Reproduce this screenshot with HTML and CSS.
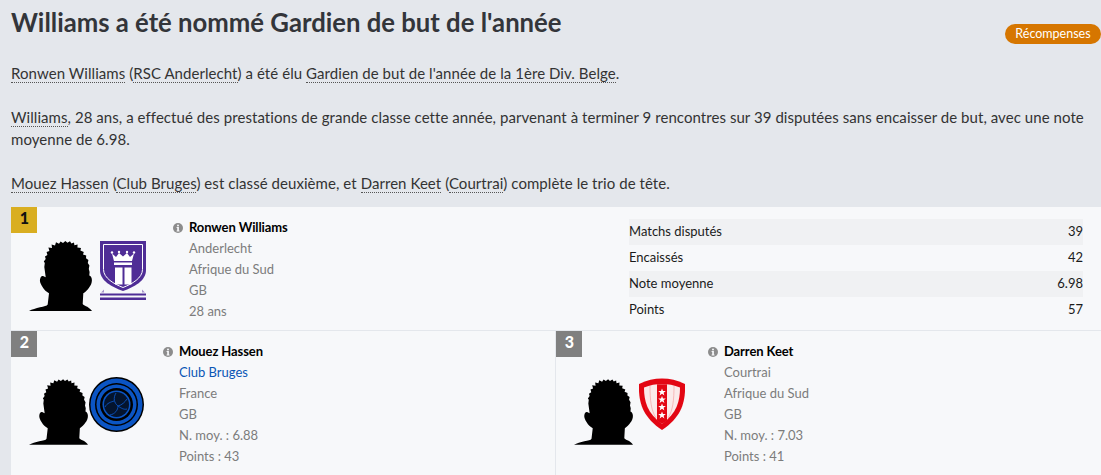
FILE: index.html
```html
<!DOCTYPE html>
<html lang="fr">
<head>
<meta charset="utf-8">
<title>Gardien de but de l'année</title>
<link rel="stylesheet" href="styles.css">
</head>
<body>
<svg class="defs" width="0" height="0" aria-hidden="true">
  <symbol id="sil" viewBox="0 0 63 70">
    <path d="M0 70C3 68.500 7 67.200 11 66.300C15 65.400 18 65 18.700 63.500L20 52.300C17.500 51 15 48.800 13.700 46.300C12 43.500 10.600 41 11 38.500C11.400 35.500 13 34.500 14 35L16.700 36.300L16 31L15.300 26L15.800 22L14.800 20.500L16.700 18L16 15.500L18.400 14L17.600 11L20.400 10L19.400 6.500L23 7L22.600 3.500L26 4.400L27 1.200L30 2.800L31.600 .4L34 2L36.400 0L38.400 1.800L41 .2L42.400 2.400L45 1.400L45.400 4.200L48.600 3.600L48.400 6.600L52 7L51.400 9.600L54.800 11L54 13.400L57.200 14.600L57 17.300L59.400 19L58.800 22L60.400 24.500L59.800 28L60.600 31L60.300 34.500C61.800 35 62.800 36.500 62.900 39C63 42 61.800 44.500 60.300 46.300C58.600 49 56.500 51 54.300 52.300L53.700 63C54.800 64.400 56.500 65 58.300 65.700C60 66.800 61.800 68.300 63 70Z"/>
  </symbol>
  <symbol id="info" viewBox="0 0 10 10">
    <circle cx="5" cy="5" r="5" fill="#8c8c8c"/>
    <rect x="4.100" y="1.700" width="1.800" height="1.600" fill="#f7f8fa"/>
    <path d="M3.600 4.100H5.900V7.500H6.500V8.400H3.600V7.500H4.200V5H3.600Z" fill="#f7f8fa"/>
  </symbol>
  <symbol id="star" viewBox="0 0 8 8">
    <path fill="#fff" d="M4 .5L5 3H7.800L5.600 4.700L6.400 7.500L4 5.800L1.600 7.500L2.400 4.700L.2 3H3Z"/>
  </symbol>
</svg>

<header class="head">
  <h1 class="title">Williams a été nommé Gardien de but de l'année</h1>
  <span class="tag">Récompenses</span>
</header>

<div class="story">
  <p><span class="lk">Ronwen Williams</span> (<span class="lk">RSC Anderlecht</span>) a été élu <span class="lk">Gardien de but de l'année de la 1ère Div. Belge</span>.</p>
  <p><span class="lk">Williams</span>, 28 ans, a effectué des prestations de grande classe cette année, parvenant à terminer 9 rencontres sur 39 disputées sans encaisser de but, avec une note<br>moyenne de 6.98.</p>
  <p><span class="lk">Mouez Hassen</span> (<span class="lk">Club Bruges</span>) est classé deuxième, et <span class="lk">Darren Keet</span> (<span class="lk">Courtrai</span>) complète le trio de tête.</p>
</div>

<section class="first card">
  <span class="rank gold">1</span>
  <div class="media media-a">
    <svg class="sil sil-a"><use href="#sil"/></svg>
    <svg class="crest crest-and" viewBox="0 0 46 59">
      <path fill="#4f2d96" d="M0 0H46V29C46 40 34 46 23 50C12 46 0 40 0 29Z"/>
      <path fill="none" stroke="#fff" stroke-width="1" d="M3.500 3.500H42.500V28.500C42.500 37 32 43 23 46.500C14 43 3.500 37 3.500 28.500Z"/>
      <g fill="#fff">
        <path d="M12 12.500L16 16L19 12L23 15.500L27 12L30 16L34 12.500L32 20H14Z"/>
        <circle cx="12" cy="11.500" r="1.200"/><circle cx="19" cy="11" r="1.200"/><circle cx="27" cy="11" r="1.200"/><circle cx="34" cy="11.500" r="1.200"/>
        <rect x="14" y="21.500" width="18" height="2.500"/>
        <rect x="15" y="26.500" width="7.500" height="17"/>
        <rect x="24.500" y="26.500" width="7" height="17"/>
      </g>
      <path fill="#4f2d96" d="M0 52.500H46V54.500H0ZM0 56.500H46V59H0Z"/>
      <path fill="#a795cc" d="M1 51.500L4 48.500V51.500ZM45 51.500L42 48.500V51.500Z"/>
    </svg>
  </div>
  <div class="info info-a">
    <div class="nm"><svg class="ic"><use href="#info"/></svg><b>Ronwen Williams</b></div>
    <div>Anderlecht</div>
    <div>Afrique du Sud</div>
    <div>GB</div>
    <div>28 ans</div>
  </div>
  <div class="stats">
    <div class="st"><span>Matchs disputés</span><span>39</span></div>
    <div class="st"><span>Encaissés</span><span>42</span></div>
    <div class="st"><span>Note moyenne</span><span>6.98</span></div>
    <div class="st"><span>Points</span><span>57</span></div>
  </div>
</section>

<div class="pair">
  <section class="card second">
    <span class="rank grey">2</span>
    <div class="media media-b">
      <svg class="sil sil-b"><use href="#sil"/></svg>
      <svg class="crest crest-bru" viewBox="0 0 55 55">
        <circle cx="27.500" cy="27.500" r="27.500" fill="#000"/>
        <circle cx="27.500" cy="27.500" r="26" fill="#0b55c4"/>
        <circle cx="27.500" cy="27.500" r="21.500" fill="#000"/>
        <circle cx="27.500" cy="27.500" r="20" fill="#0b55c4"/>
        <circle cx="27.500" cy="27.500" r="16.500" fill="#000"/>
        <circle cx="27.500" cy="27.500" r="14" fill="#0b55c4"/>
        <circle cx="27.500" cy="27.500" r="12.500" fill="#04142e"/>
        <path fill="none" stroke="#0b55c4" stroke-width=".9" d="M27 16C24 21 25 26 29 29C33 28 36 25 38 22M29 29C29 33 26 37 21 38M25 24C22 25 18 26 16 30M29 29C32 31 35 33 38 32"/>
      </svg>
    </div>
    <div class="info info-b">
      <div class="nm"><svg class="ic"><use href="#info"/></svg><b>Mouez Hassen</b></div>
      <div class="blue">Club Bruges</div>
      <div>France</div>
      <div>GB</div>
      <div>N. moy. : 6.88</div>
      <div>Points : 43</div>
    </div>
  </section>
  <section class="card third">
    <span class="rank grey">3</span>
    <div class="media media-b">
      <svg class="sil sil-b"><use href="#sil"/></svg>
      <svg class="crest crest-kor" viewBox="0 0 46 52">
        <path fill="#e30613" d="M0 6C8 2 15 .5 23 .5C31 .5 38 2 46 6C46.500 22 44 38 23 52C2 38 -.5 22 0 6Z"/>
        <path fill="#fbeaea" d="M5 9.500C11 7 17 6 23 6C29 6 35 7 41 9.500C41 23 38 35 23 46C8 35 5 23 5 9.500Z"/>
        <path fill="#e30613" d="M18 6.300H28V42.500L23 46L18 42.500Z"/>
        <path fill="none" stroke="#f3a3a3" stroke-width=".7" d="M11 8C11 22 12 32 17 40M35 8C35 22 34 32 29 40"/>
        <use href="#star" x="19" y="10" width="8" height="8"/>
        <use href="#star" x="19" y="17.500" width="8" height="8"/>
        <use href="#star" x="19" y="25" width="8" height="8"/>
        <use href="#star" x="19" y="33" width="8" height="8"/>
      </svg>
    </div>
    <div class="info info-b">
      <div class="nm"><svg class="ic"><use href="#info"/></svg><b>Darren Keet</b></div>
      <div>Courtrai</div>
      <div>Afrique du Sud</div>
      <div>GB</div>
      <div>N. moy. : 7.03</div>
      <div>Points : 41</div>
    </div>
  </section>
</div>
</body>
</html>
```

FILE: styles.css
```css
* { box-sizing: border-box; }
html, body { margin: 0; height: 475px; overflow: hidden; }
body {
  background: #e4e7ec;
  color: #333;
  font-family: Lato, "Liberation Sans", sans-serif;
  font-size: 15px;
  letter-spacing: .06px;
  line-height: 22px;
  padding-left: 11px;
}
.defs { position: absolute; }
.head { display: flex; justify-content: space-between; height: 62px; }
.title {
  margin: 7px 0 0;
  font-size: 25.7px;
  line-height: 30px;
  font-weight: 700;
  letter-spacing: 0;
  color: #33353a;
}
.tag {
  align-self: flex-start;
  margin-top: 24px;
  width: 96px;
  height: 20px;
  border-radius: 10px;
  background: #d67600;
  color: #fff;
  font-size: 12.5px;
  letter-spacing: 0;
  line-height: 20px;
  text-align: center;
}
.story { padding-right: 5px; }
.story p { margin: 0 0 22px; }
.lk { border-bottom: 1px dotted #555; }
.card { position: relative; background: #f7f8fa; display: flex; }
.first {
  margin-top: -9px;
  height: 124px;
  border-bottom: 1px solid #e4e7ec;
}
.rank {
  position: absolute;
  left: 0;
  top: 0;
  width: 26px;
  height: 26px;
  padding-left: 1px;
  font-size: 16px;
  font-weight: 900;
  line-height: 22px;
  text-align: center;
}
.gold { background: #d9ae21; color: #111; }
.grey { background: #808080; color: #fff; }
.media { display: flex; align-items: flex-start; flex: none; }
.media-a { width: 162px; padding: 34px 0 0 18px; }
.media-b { width: 152px; padding: 46px 0 0 18px; }
.sil { display: block; fill: #000; flex: none; }
.sil-a { width: 63px; height: 70px; }
.sil-b { width: 59px; height: 66px; margin-top: 2px; }
.crest { display: block; flex: none; }
.crest-and { width: 46px; height: 59px; margin-left: 8px; }
.crest-bru { width: 55px; height: 55px; margin-left: 1px; }
.crest-kor { width: 46px; height: 52px; margin: 1px 0 0 6px; }
.info { font-size: 13px; letter-spacing: 0; line-height: 21px; color: #7c7c7c; padding: 10px 0 0 16px; }
.info-a { width: 456px; }
.info b { color: #000; font-weight: 700; letter-spacing: -.1px; }
.info .blue { color: #0a56b5; }
.nm { display: flex; align-items: center; margin-left: -16px; }
.ic { width: 10px; height: 10px; margin-right: 6px; flex: none; }
.stats { width: 454px; padding-top: 12px; font-size: 13px; letter-spacing: 0; color: #1b1b1b; }
.st { display: flex; justify-content: space-between; height: 26px; line-height: 24px; }
.st:nth-child(odd) { background: #f0f1f3; }
.pair { display: flex; }
.pair .card { height: 144px; }
.second { width: 544px; }
.third { width: 546px; border-left: 1px solid #e4e7ec; }
```
